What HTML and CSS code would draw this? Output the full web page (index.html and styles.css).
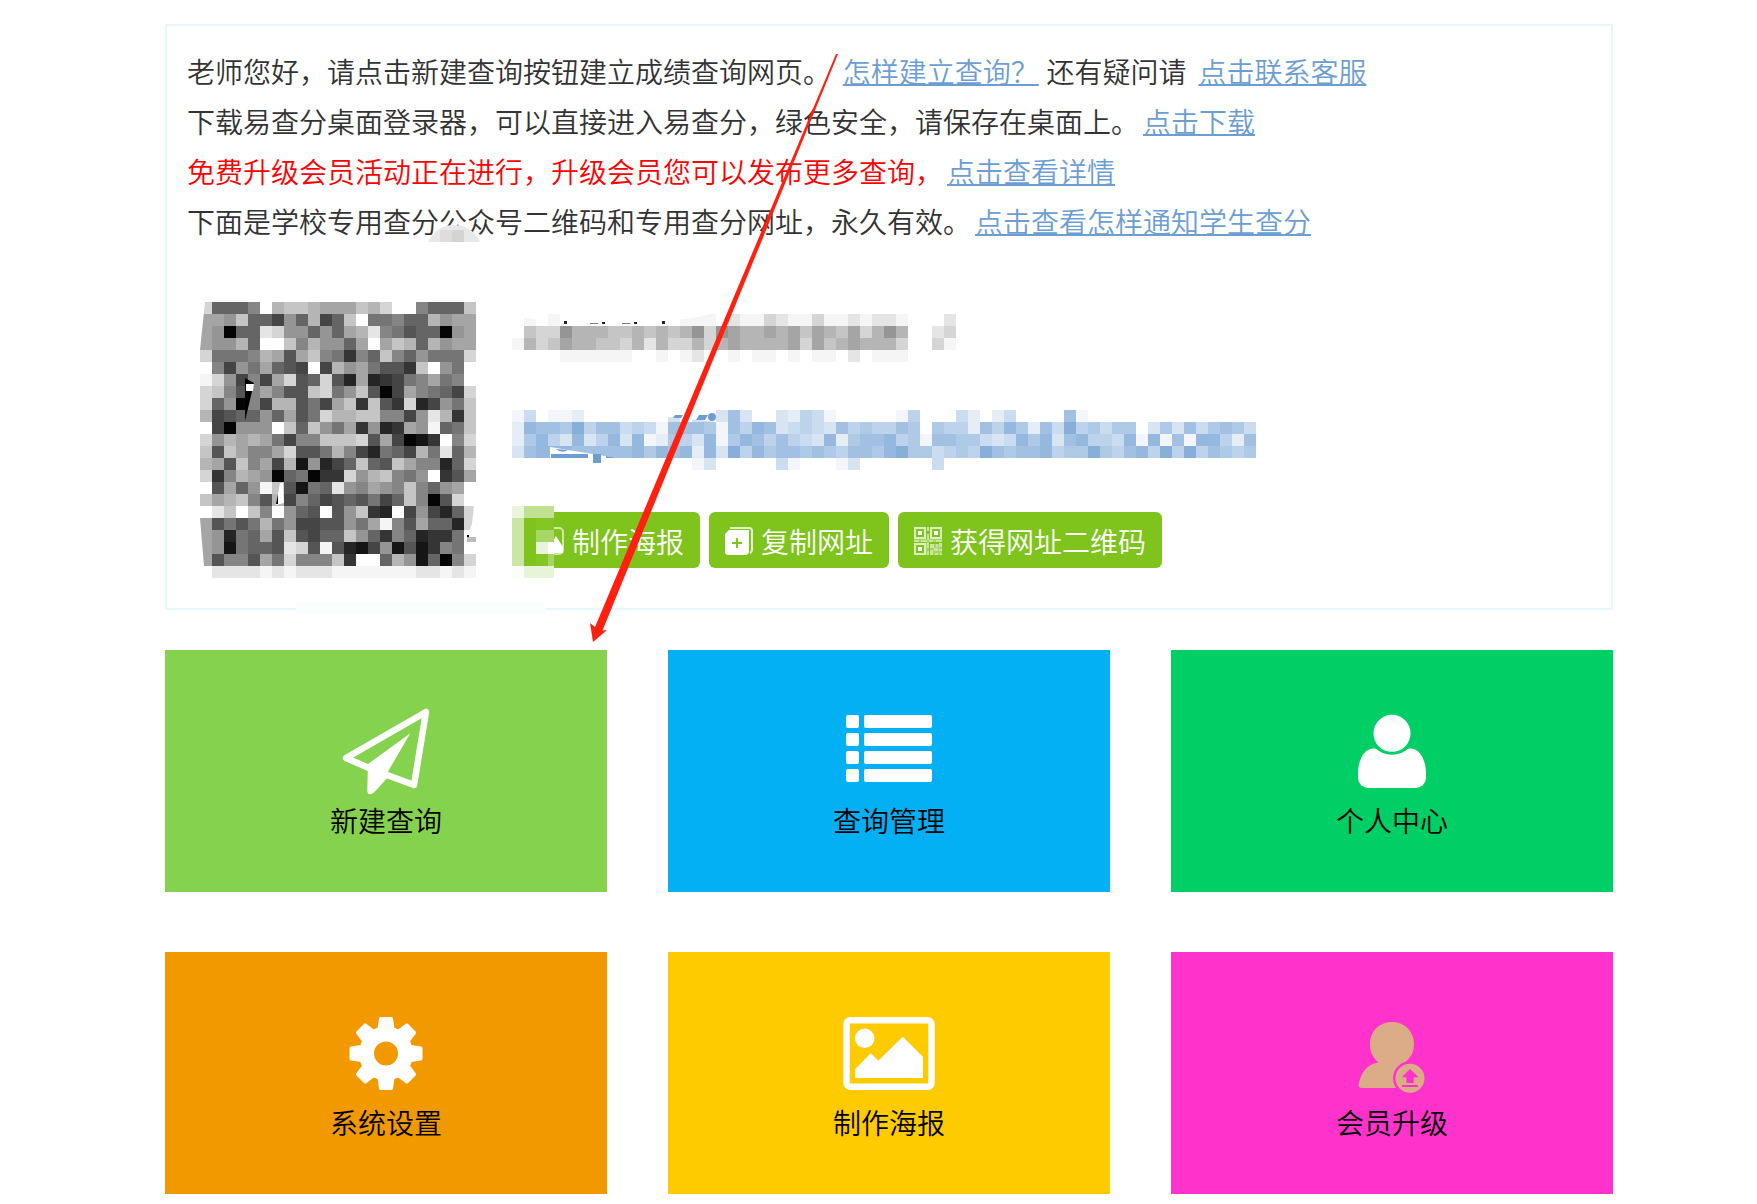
FILE: index.html
```html
<!DOCTYPE html>
<html lang="zh-CN">
<head>
<meta charset="utf-8">
<meta name="viewport" content="width=device-width, initial-scale=1">
<title>易查分</title>
<link rel="stylesheet" href="styles.css">
</head>
<body>
<main class="page">
  <section class="notice">
    <p>老师您好，请点击新建查询按钮建立成绩查询网页。 <a href="#how">怎样建立查询？</a> 还有疑问请 <a href="#service">点击联系客服</a></p>
    <p>下载易查分桌面登录器，可以直接进入易查分，绿色安全，请保存在桌面上。<a href="#download">点击下载</a></p>
    <p class="promo">免费升级会员活动正在进行，升级会员您可以发布更多查询，<a href="#detail">点击查看详情</a></p>
    <p>下面是学校专用查分公众号二维码和专用查分网址，永久有效。<a href="#notify">点击查看怎样通知学生查分</a></p>

    <div class="school">
      <svg class="qr" width="276" height="276" viewBox="0 0 276 276" role="img" aria-label="公众号二维码">
        <g data-mosaic="qr"></g>
        <path d="M0 0h5L0 48zM0 216l5 60H0zM274 204h2v30h-9l5-12z" fill="#fff"/>
        <path d="M267 235h9v5h-9z" fill="#bbb"/>
        <path d="M45 76l9 5-9 38zM267 233h2v2h-2z" fill="#000"/>
        <path d="M46 82h8l-1 7h-7zM80 181h3l1 20-8 2z" fill="#fff"/>
        <path d="M76 202l2-10v10z" fill="#000"/>
      </svg>

      <div class="info">
        <svg class="name" width="444" height="48" viewBox="0 0 444 48" role="img" aria-label="学校名称">
          <g data-mosaic="name"></g>
          <path d="M10 3l16 3V0H10zM166 6l20-3 12-3h-32z" fill="#fff"/>
          <path d="M52 7h3v3h-3zM90 8h3v2h-3zM122 8h3v2h-3zM150 7h3v3h-3z" fill="#222"/>
          <path d="M78 9h8v1h-8zM110 9h8v1h-8z" fill="#877"/>
        </svg>
        <svg class="address" width="744" height="60" viewBox="0 0 744 60" role="img" aria-label="查分网址">
          <g data-mosaic="address"></g>
          <path d="M156 7l12 1v4h-12zM180 9l24 3h-24z" fill="#d3e1f0"/>
          <path d="M38 37v11h67z" fill="#fff"/>
          <path d="M39 44h37v4H39zM81 44h8v9h-8zM94 46l11 2H94zM44 39l12 1q-6 4-12-1zM163 5h8l-2 3h-8zM187 5h9l-3 5h-9z" fill="#6d9ed2"/>
          <circle cx="200" cy="7" r="4" fill="#6d9ed2"/>
        </svg>
        <div class="actions">
          <button type="button">
            <svg width="28" height="28" viewBox="0 0 28 28" aria-hidden="true">
              <rect x="1" y="1" width="26" height="26" rx="4" fill="none" stroke="#cfeaa8" stroke-width="2"/>
              <path d="M3 26v-8l6-5 5 5 6-9 7 11v6z" fill="#fff"/>
            </svg>
            制作海报
          </button>
          <button type="button">
            <svg width="28" height="28" viewBox="0 0 28 28" aria-hidden="true">
              <path d="M5 1h19q3 0 3 3v19q0 2-2 3" fill="none" stroke="#e4f4ce" stroke-width="2"/>
              <path d="M6 3H24V21L19 28H3Q0 28 0 25V8Q0 7 1 6L4 3z" fill="#fff"/>
              <path d="M24 20v4q0 4-4 4h-6z" fill="#fff"/>
              <path d="M12 11v10M7 16h10" stroke="#7fc41c" stroke-width="2"/>
            </svg>
            复制网址
          </button>
          <button type="button">
            <svg width="28" height="28" viewBox="0 0 28 28" aria-hidden="true">
              <g fill="none" stroke="#dcf0bf" stroke-width="2">
                <path d="M1 1h10v10H1zM17 1h10v10H17zM1 17h10v10H1z"/>
              </g>
              <path d="M4 4h4v4H4zM20 4h4v4h-4zM4 20h4v4H4z" fill="#fff"/>
              <path d="M0 12h28v3H0zM12 15h3v13h-3zM16 17h12v11H16z" fill="#a5d663"/>
              <path d="M13 0h2v4h-2zM13 7h2v6h-2zM0 13h5v2H0zM7 13h6v2H7zM15 13h4v2h-4zM22 13h6v2h-6zM13 16h2v5h-2zM16 17h4v4h-4zM22 17h2v3h-2zM25 16h3v4h-3zM20 21h4v3h-4zM16 23h3v5h-3zM25 22h3v2h-3zM21 26h3v2h-3zM26 26h2v2h-2zM13 24h2v4h-2z" fill="#c8e79b"/>
            </svg>
            获得网址二维码
          </button>
          <svg class="button-mosaic" width="42" height="72" viewBox="0 0 42 72" aria-hidden="true">
            <path d="M0 0h42v72H0z" fill="#7fc41c"/>
            <path d="M0 0h12v12H0z" fill="#eaf5dc"/><path d="M12 0h30v12H12z" fill="#c0e18f"/>
            <path d="M0 12h12v48H0z" fill="#cae6a4"/>
            <path d="M24 24h18v12H24z" fill="#a8d768"/><path d="M24 36h12v12H24z" fill="#e8f5da"/>
            <path d="M36 36h6v12h-6z" fill="#fff"/><path d="M36 48h6v12h-6z" fill="#a6d566"/>
            <path d="M0 60h12v12H0z" fill="#fbfdf7"/><path d="M12 60h30v12H12z" fill="#e7f4d8"/>
            <path d="M24 12h18v12H24zM24 48h12v12H24z" fill="#84c724"/>
          </svg>
        </div>
      </div>
    </div>
    <span class="border-smudge"></span>
  </section>

  <nav class="tiles" aria-label="功能菜单">
    <a class="tile tile-create" href="#create">
      <svg width="96" height="96" viewBox="0 0 96 96" aria-hidden="true">
        <path d="M31 64L8 54 88 8 76 81 49 71" fill="none" stroke="#fff" stroke-width="6.500" stroke-linejoin="round"/>
        <path d="M30 60L72.300 29.300 50.300 67 49.300 74 36 88.500Q29.300 93 29.300 86z" fill="#fff"/>
      </svg>
      新建查询
    </a>
    <a class="tile tile-manage" href="#manage">
      <svg width="96" height="96" viewBox="0 0 96 96" fill="#fff" aria-hidden="true">
        <rect x="5" y="11" width="13" height="13" rx="2"/><rect x="23" y="11" width="68" height="13" rx="2"/>
        <rect x="5" y="29" width="13" height="13" rx="2"/><rect x="23" y="29" width="68" height="13" rx="2"/>
        <rect x="5" y="47" width="13" height="13" rx="2"/><rect x="23" y="47" width="68" height="13" rx="2"/>
        <rect x="5" y="65" width="13" height="13" rx="2"/><rect x="23" y="65" width="68" height="13" rx="2"/>
      </svg>
      查询管理
    </a>
    <a class="tile tile-profile" href="#profile">
      <svg width="96" height="96" viewBox="0 0 96 96" fill="#fff" aria-hidden="true">
        <circle cx="48" cy="29.300" r="18.500"/>
        <path d="M31.500 44.500Q39 50.700 48 50.700T64.500 44.500C76 43 82 56 82 70V73C82 80 77 84 71 84H25C19 84 14 80 14 73V70C14 56 20 43 31.500 44.500z"/>
      </svg>
      个人中心
    </a>
    <a class="tile tile-settings" href="#settings">
      <svg width="96" height="96" viewBox="0 0 96 96" fill="#fff" aria-hidden="true">
        <defs><path id="tooth" d="M39.300 24L41 12.500Q41.200 11 42.700 11H53.300Q54.800 11 55 12.500L56.700 24z"/></defs>
        <circle cx="48" cy="47.500" r="19.500" fill="none" stroke="#fff" stroke-width="15"/>
        <use href="#tooth"/>
        <use href="#tooth" transform="rotate(45 48 47.500)"/>
        <use href="#tooth" transform="rotate(90 48 47.500)"/>
        <use href="#tooth" transform="rotate(135 48 47.500)"/>
        <use href="#tooth" transform="rotate(180 48 47.500)"/>
        <use href="#tooth" transform="rotate(225 48 47.500)"/>
        <use href="#tooth" transform="rotate(270 48 47.500)"/>
        <use href="#tooth" transform="rotate(315 48 47.500)"/>
      </svg>
      系统设置
    </a>
    <a class="tile tile-poster" href="#poster">
      <svg width="96" height="96" viewBox="0 0 96 96" aria-hidden="true">
        <rect x="5.500" y="14.200" width="85" height="66.600" rx="4" fill="none" stroke="#fff" stroke-width="6.500"/>
        <circle cx="23.700" cy="32.300" r="9.700" fill="#fff"/>
        <path d="M14.300 63L29.700 47.300 37.300 54.700 61.700 30.700 82 50.700V72H14.300z" fill="#fff"/>
      </svg>
      制作海报
    </a>
    <a class="tile tile-upgrade" href="#upgrade">
      <svg width="96" height="96" viewBox="0 0 96 96" aria-hidden="true">
        <path d="M48 16C61 16 70 26 70 38 70 46 66 53 61 56 60 58 64 58 66 59V82H18Q14 82 14.700 78C17 66 24 58 34.500 56.500 29 52 26 46 26 38 26 26 35 16 48 16z" fill="#dcab88"/>
        <circle cx="66" cy="72.300" r="17" fill="#ff33cb"/>
        <circle cx="66" cy="72.300" r="14.500" fill="#dcab88"/>
        <path d="M66 63L74.700 71.300H69.700V77H62.300V71.300H57.700zM58 79H74V81H58z" fill="#ff33cb"/>
      </svg>
      会员升级
    </a>
  </nav>

  <svg class="text-smudge" width="52" height="17" viewBox="0 0 52 17" aria-hidden="true">
    <path d="M0 17Q8 0 26 0T52 17z" fill="#e8e8e8"/>
    <path d="M12 5h12v12H12z" fill="#dedddc"/><path d="M24 5h12v12H24z" fill="#d4d4d3"/>
  </svg>
  <svg class="arrow" width="248" height="590" viewBox="0 0 248 590" aria-hidden="true">
    <path d="M246 0h2L12.500 576.500 17 576 3 588 0 569 5 573z" fill="#ff2010"/>
  </svg>
</main>
<script src="mosaic.js"></script>
</body>
</html>
```

FILE: styles.css
```css
* {
  box-sizing: border-box;
}

body {
  margin: 0;
  background: #fff;
  color: #333;
  font-family: "Liberation Sans", "Noto Sans CJK SC", sans-serif;
  font-size: 28px;
  font-weight: 350;
}

.page {
  position: relative;
  padding: 24px 144px 10px 165px;
}

.notice {
  position: relative;
  padding: 23px 20px 30px;
  border: 2px solid #e6f8f8;
}

.notice p {
  margin: 0;
  line-height: 50px;
}

.notice a {
  margin-left: 4px;
  color: #6d9ed2;
  text-decoration: underline;
  text-decoration-thickness: 2px;
  text-underline-offset: 1px;
  text-decoration-skip-ink: none;
}

.notice .promo {
  color: #f00;
}

.school {
  display: flex;
  gap: 36px;
  padding: 53px 0 0 13px;
}

.school svg {
  display: block;
  flex: none;
}

.info {
  padding-top: 12px;
}

.address {
  margin-top: 48px;
}

.actions {
  position: relative;
  display: flex;
  gap: 9px;
  margin-top: 42px;
  padding-left: 8px;
}

.actions button {
  display: flex;
  align-items: center;
  gap: 8px;
  height: 56px;
  padding: 1px 16px 0;
  border: 0;
  border-radius: 6px;
  background: #7fc41c;
  color: #fff;
  font: inherit;
  white-space: nowrap;
}

.actions .button-mosaic {
  position: absolute;
  left: 0;
  top: -6px;
}

.border-smudge {
  position: absolute;
  left: 129px;
  bottom: -6px;
  width: 250px;
  height: 12px;
  background: #fbfefe;
}

.tiles {
  display: grid;
  grid-template-columns: repeat(3, 1fr);
  gap: 60px 61px;
  margin-top: 40px;
}

.tile {
  display: flex;
  flex-direction: column;
  align-items: center;
  padding: 54px 0 46px;
  color: #000;
  line-height: 46px;
  text-decoration: none;
}

.tile-create { background: #85d24f; }
.tile-manage { background: #02b0f3; }
.tile-profile { background: #00cf65; }
.tile-settings { background: #f29900; }
.tile-poster { background: #fecb00; }
.tile-upgrade { background: #ff33cb; }

.text-smudge {
  position: absolute;
  left: 428px;
  top: 225px;
}

.arrow {
  position: absolute;
  left: 590px;
  top: 54px;
}
```

FILE: mosaic.js
```js
// Each character is one 12px cell: a level, or "." for an empty cell.
const CELL = 12;

const mosaics = {
  qr: [
    "d6668.bccbaaacbd..8666c",
    "aa9c66496b46c.77866b9aa",
    "a9066ed99696abe8756609a",
    "a99b6..c8b996a.acb6b9aa",
    "d7778ba5ac87386c869777d",
    ".8497a654.4b9a7553c.97.",
    "fd9484ad56d52a23478a78.",
    "dc858a855cd79c504a8764d",
    "d69084bb574ac3c53d2497c",
    "b456696a57dbbcc8849eb3c",
    ".40999.c6c97a3923a9f67c",
    "d9baba7488cccd5a4013.8d",
    "c5ca88ad557b842764b7e6b",
    "ba5c8a4b19246c65ca8826d",
    "d38ba9067033d9bc879.35a",
    ".5a69fc5176e98a98c869a.",
    "cabc85b4864565746c805d.",
    ".ec.c8.965.59c32.49426d",
    "a5757b79445597af85a662d",
    "a9276a5c5466c963862337.",
    "a917665ed5f52149151387.",
    "a5885a7d888c3..6b91608d",
    ".eeeefefeeefffffffeefef"
  ],
  name: [
    ".f.f..........fff.effdeffdffefeef...e",
    ".cdd9bbbccbcbcb9d9abbabacabcadb9b..ed",
    "fbdcabbccdbebddbdbabbbbadacbabbbd..df",
    "....ffffff..f.fe..f.ff.f.ff.e.fff...."
  ],
  address: [
    "14.112...........373..32541.....15...42.24....71",
    "2877695774541777617587345437565576.65527586274956466.363746764",
    "26853835838126538168757543826778561776643486837855481817188527",
    "37888777778687828395867767657768966456597677856696578595957656",
    "...............13.....41...13......4"
  ]
};

const paint = {
  gray: c => {
    const level = parseInt(c, 16) * 16 + 5;
    return `fill="rgb(${level},${level},${level})"`;
  },
  blue: c => `fill="#6d9ed2" fill-opacity="${(c / 11).toFixed(2)}"`
};

document.querySelectorAll("[data-mosaic]").forEach(group => {
  const name = group.dataset.mosaic;
  const fill = name === "address" ? paint.blue : paint.gray;
  group.setAttribute("shape-rendering", "crispEdges");
  group.innerHTML = mosaics[name]
    .flatMap((row, y) => [...row].map((c, x) =>
      c === "." ? "" : `<rect x="${x * CELL}" y="${y * CELL}" width="${CELL}" height="${CELL}" ${fill(c)}/>`))
    .join("");
});
```
